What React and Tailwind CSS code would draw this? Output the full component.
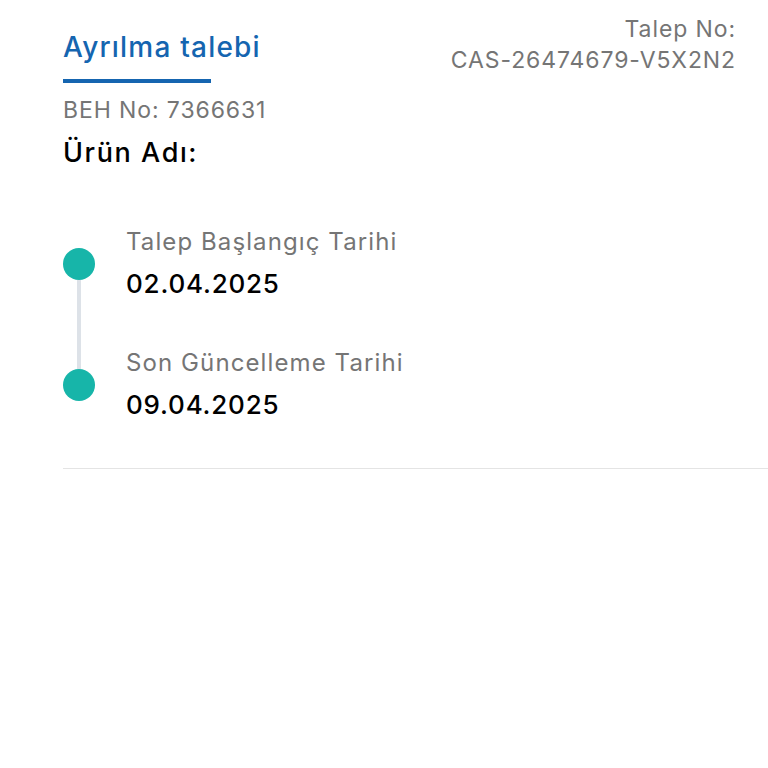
import React from "react";

const EVENTS = [
  { label: "Talep Başlangıç Tarihi", date: "02.04.2025" },
  { label: "Son Güncelleme Tarihi", date: "09.04.2025" },
];

export default function App() {
  return (
    <div className="w-[768px] h-[768px] bg-white font-['Inter',sans-serif] overflow-hidden">
      <div className="pl-[63px] pr-[32px] pt-[14px]">
        <div className="flex justify-between">
          <div className="pt-[16px]">
            <h1 className="text-[28px] leading-[34px] font-medium tracking-[1.2px] text-[#1565b0]">Ayrılma talebi</h1>
            <div className="w-[148px] h-[4px] bg-[#1565b0] mt-[15px]"></div>
            <div className="text-[23px] leading-[30px] tracking-[0.9px] text-[#757575] mt-[12px]">BEH No: 7366631</div>
            <div className="text-[27px] leading-[32px] font-medium tracking-[1.6px] text-black mt-[12px]">Ürün Adı:</div>
          </div>
          <div className="text-right text-[23px] leading-[31px] tracking-[0.9px] text-[#757575]">
            <div>Talep No:</div>
            <div>CAS-26474679-V5X2N2</div>
          </div>
        </div>

        <div className="mt-[58px] flex flex-col">
          {EVENTS.map((e, i) => (
            <div key={i} className="flex">
              <div className="w-[32px] flex flex-col items-center">
                <div className={`w-[4px] h-[21px] ${i === 0 ? "" : "bg-[#dde2e8]"}`}></div>
                <div className="w-[32px] h-[32px] rounded-full bg-[#17b5a9] shrink-0"></div>
                <div className={`w-[4px] flex-1 ${i === 0 ? "bg-[#dde2e8]" : ""}`}></div>
              </div>
              <div className={`pl-[31px] ${i === 0 ? "pb-[48px]" : ""}`}>
                <div className="text-[24px] leading-[30px] tracking-[1.1px] text-[#757575]">{e.label}</div>
                <div className="text-[26px] leading-[32px] font-medium tracking-[0.8px] text-black mt-[11px]">{e.date}</div>
              </div>
            </div>
          ))}
        </div>

        <div className="mt-[47px] mr-[-32px] h-[1px] bg-[#e4e4e4]"></div>
      </div>
    </div>
  );
}
